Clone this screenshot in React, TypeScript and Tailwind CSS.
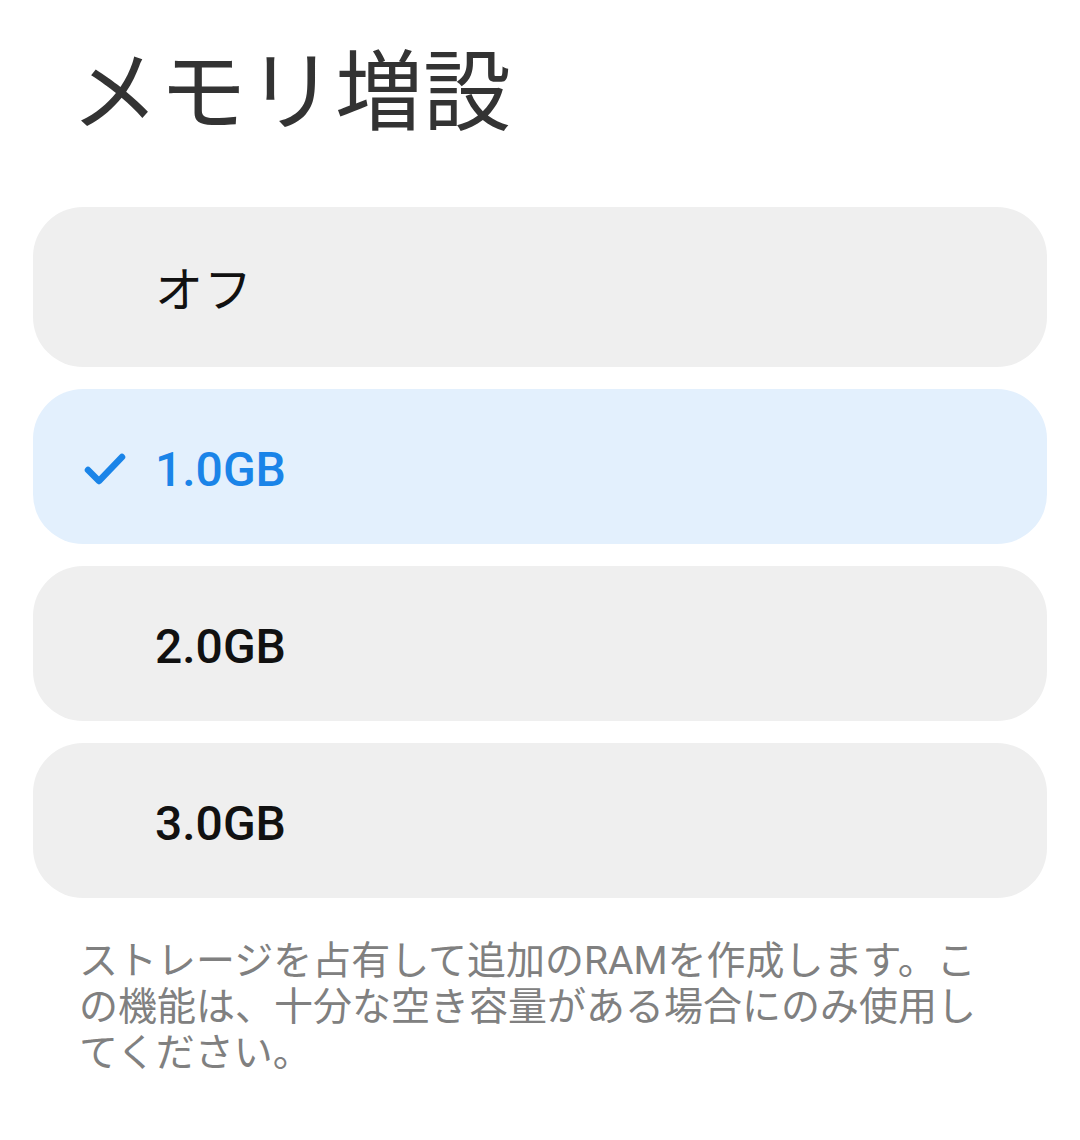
import React from 'react';

const options = ['オフ', '1.0GB', '2.0GB', '3.0GB'];
const selected = 1;

const font = { fontFamily: 'Roboto, "Noto Sans CJK JP", sans-serif' };

export default function App() {
  return (
    <div className="w-[1080px] h-[1140px] bg-white" style={font}>
      <h1 className="pl-[71px] pt-[38px] text-[88px] leading-[110px] text-[#333333] font-normal">
        メモリ増設
      </h1>

      {/* option list */}
      <div className="mt-[59px] px-[33px] flex flex-col gap-[22px]">
        {options.map((label, i) => {
          const active = i === selected;
          return (
            <div
              key={label}
              className={
                active
                  ? 'h-[155px] rounded-[50px] bg-[#e3f0fd] flex items-center pt-[6px]'
                  : i === 0
                    ? 'h-[160px] rounded-[50px] bg-[#efefef] flex items-center pt-[8px]'
                    : 'h-[155px] rounded-[50px] bg-[#efefef] flex items-center pt-[6px]'
              }
            >
              <div className="w-[122px] flex justify-end pr-[29px]">
                {active && (
                  <svg width="42" height="34" viewBox="0 0 42 34" fill="none">
                    <path
                      d="M4 17 L15 28 L38 4"
                      stroke="#1a84e8"
                      strokeWidth="6.5"
                      strokeLinecap="round"
                      strokeLinejoin="round"
                    />
                  </svg>
                )}
              </div>
              <span
                className={
                  active
                    ? 'text-[48px] font-medium text-[#1a84e8]'
                    : i === 0
                      ? 'text-[48px] font-normal text-[#111111] tracking-[1px]'
                      : 'text-[48px] font-medium text-[#111111]'
                }
              >
                {label}
              </span>
            </div>
          );
        })}
      </div>

      <p className="mt-[40px] ml-[79px] w-[910px] text-[39px] leading-[46px] text-[#808080]">
        ストレージを占有して追加のRAMを作成します。この機能は、十分な空き容量がある場合にのみ使用してください。
      </p>
    </div>
  );
}
